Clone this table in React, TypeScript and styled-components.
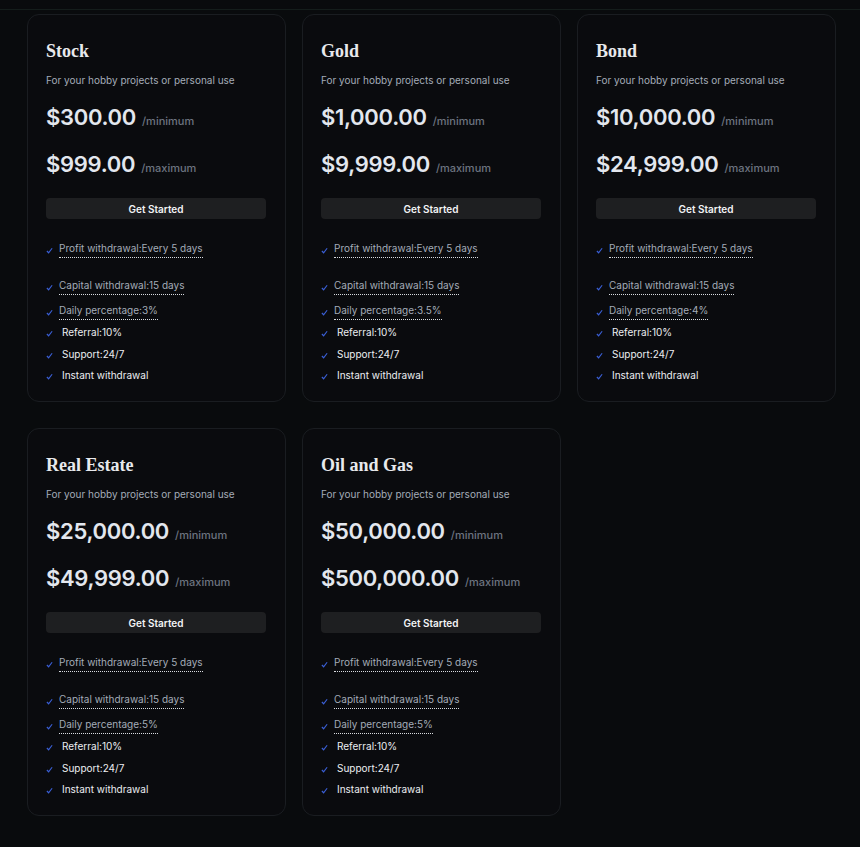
import React from 'react';
import styled, { createGlobalStyle } from 'styled-components';

interface planProps {
  plan: {
    name: string,
    min: string,
    max: string,
    daily: string,
  }
}

const GlobalStyle = createGlobalStyle`
  html, body {
    margin: 0;
    padding: 0;
    background: #090b0d;
  }
  body {
    font-family: Inter, "Liberation Sans", sans-serif;
  }
`;

const PageLayout = styled.div`
  min-height: 847px;
  background: #090b0d;
`;

const TopBar = styled.div`
  height: 9px;
  border-bottom: 1px solid #141d1b;
`;

const PlanGrid = styled.div`
  display: grid;
  grid-template-columns: repeat(3, 259px);
  column-gap: 16px;
  row-gap: 26px;
  padding: 4px 24px 30px 27px;
`;

const CardLayout = styled.div`
  display: flex;
  flex-direction: column;
  box-sizing: border-box;
  height: 388px;
  padding: 24px 19px 20px 18px;
  border: 1px solid #1a1d21;
  border-radius: 12px;
  background: #0a0b0e;

  & > * {
    flex-shrink: 0;
  }
`;

const PlanName = styled.h3`
  margin: 0;
  font-family: "Liberation Serif", "Times New Roman", serif;
  font-weight: bold;
  font-size: 18px;
  line-height: 24px;
  color: #e8e9ec;
`;

const PlanDesc = styled.p`
  margin: 9px 0 0;
  font-size: 10px;
  line-height: 16px;
  color: #a4acb8;
`;

const PriceRow = styled.div<{ $space: number }>`
  display: flex;
  align-items: baseline;
  gap: 6px;
  margin-top: ${(p) => p.$space}px;
  line-height: 28px;
`;

const Price = styled.span`
  font-size: 22px;
  font-weight: 600;
  color: #e3e7ee;
  letter-spacing: -0.3px;
`;

const PriceUnit = styled.span`
  font-size: 11px;
  font-weight: 500;
  color: #6d7480;
`;

const StartButton = styled.button`
  margin-top: 16px;
  height: 21px;
  border: none;
  border-radius: 4px;
  background: #1e1f21;
  color: #f2f3f5;
  font-family: Inter, "Liberation Sans", sans-serif;
  font-size: 10px;
  font-weight: 600;
  cursor: pointer;
`;

const FeatureList = styled.ul`
  list-style: none;
  margin: 21px 0 0;
  padding: 0;
`;

const FeatureItem = styled.li<{ $space: number }>`
  display: flex;
  align-items: center;
  gap: 6px;
  margin-top: ${(p) => p.$space}px;
`;

const CheckMark = styled.svg`
  flex: none;
  width: 7px;
  height: 7px;
  margin-top: 3px;
`;

const FeatureText = styled.span<{ $dotted?: boolean }>`
  font-size: 10px;
  line-height: 16px;
  color: ${(p) => (p.$dotted ? '#a4acb8' : '#eceef1')};
  padding-left: ${(p) => (p.$dotted ? 0 : 3)}px;
  border-bottom: ${(p) => (p.$dotted ? '1px dotted #d8dbe0' : 'none')};
  padding-bottom: ${(p) => (p.$dotted ? 1 : 0)}px;
`;

const plans = [
  { name: 'Stock', min: '$300.00', max: '$999.00', daily: '3%' },
  { name: 'Gold', min: '$1,000.00', max: '$9,999.00', daily: '3.5%' },
  { name: 'Bond', min: '$10,000.00', max: '$24,999.00', daily: '4%' },
  { name: 'Real Estate', min: '$25,000.00', max: '$49,999.00', daily: '5%' },
  { name: 'Oil and Gas', min: '$50,000.00', max: '$500,000.00', daily: '5%' },
];

function Check() {
  return (
    <CheckMark viewBox="0 0 8 8">
      <path d="M1 4.6 L3 6.6 L7 1.4" fill="none" stroke="#3a5fd6" strokeWidth="1.3" />
    </CheckMark>
  );
}

function PlanCard(props: planProps) {
  const { plan } = props;
  const features = [
    { text: 'Profit withdrawal:Every 5 days', dotted: true, space: 0 },
    { text: 'Capital withdrawal:15 days', dotted: true, space: 19 },
    { text: `Daily percentage:${plan.daily}`, dotted: true, space: 7 },
    { text: 'Referral:10%', dotted: false, space: 4 },
    { text: 'Support:24/7', dotted: false, space: 6 },
    { text: 'Instant withdrawal', dotted: false, space: 5 },
  ];
  return (
    <CardLayout>
      <PlanName>{plan.name}</PlanName>
      <PlanDesc>For your hobby projects or personal use</PlanDesc>
      <PriceRow $space={15}>
        <Price>{plan.min}</Price>
        <PriceUnit>/minimum</PriceUnit>
      </PriceRow>
      <PriceRow $space={15}>
        <Price>{plan.max}</Price>
        <PriceUnit>/maximum</PriceUnit>
      </PriceRow>
      <StartButton type="button">Get Started</StartButton>
      <FeatureList>
        {features.map((f) => (
          <FeatureItem key={f.text} $space={f.space}>
            <Check />
            <FeatureText $dotted={f.dotted}>{f.text}</FeatureText>
          </FeatureItem>
        ))}
      </FeatureList>
    </CardLayout>
  );
}

export default function App() {
  return (
    <PageLayout>
      <GlobalStyle />
      <TopBar />
      <PlanGrid>
        {plans.map((p) => <PlanCard key={p.name} plan={p} />)}
      </PlanGrid>
    </PageLayout>
  );
}
